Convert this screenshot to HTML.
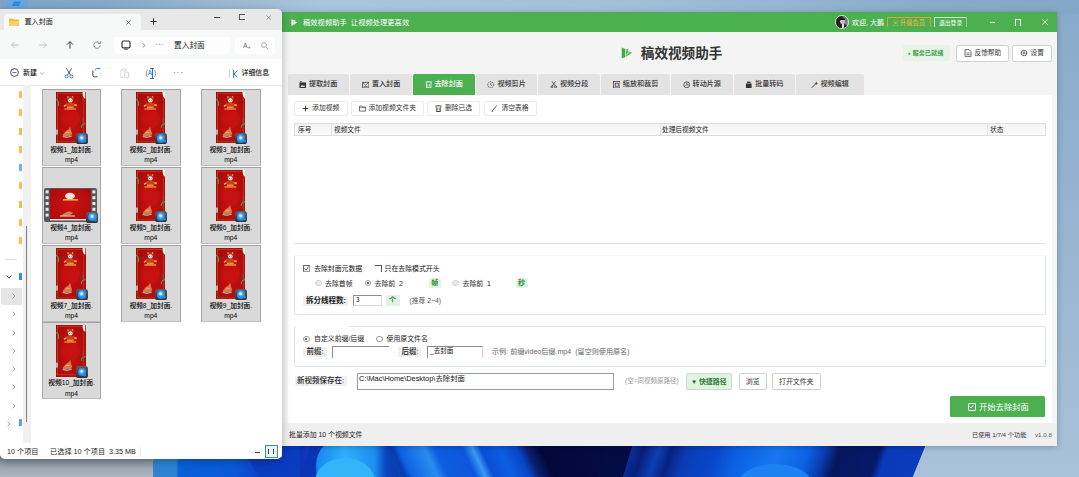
<!DOCTYPE html><html lang="zh-CN"><head><meta charset="utf-8"><title>稿效视频助手</title><style>
*{box-sizing:border-box;margin:0;padding:0}
html,body{width:1079px;height:477px;overflow:hidden}
body{position:relative;background:#a3bbd2;font-family:"Liberation Sans","Noto Sans CJK SC",sans-serif;font-size:6.9px;color:#222;line-height:1}
.a{position:absolute}
.t{position:absolute;white-space:nowrap;line-height:10px;height:10px}
#wall{left:0;top:0;width:1079px;height:477px}
/* explorer */
#ex{z-index:3;left:0;top:9px;width:281.5px;height:449.5px;background:#fff;border-radius:0 5px 5px 5px;overflow:hidden;box-shadow:0 2px 8px rgba(0,0,0,.28)}
#ex .tb{left:0;top:0;width:282px;height:21px;background:#e8e8e8}
#ex .tab{left:4px;top:5px;width:137px;height:17px;background:#f7f8f8;border-radius:4px 4px 0 0}
#ex .nav{left:0;top:21px;width:282px;height:29px;background:#f7f8f8}
#ex .addr{left:114px;top:27.5px;width:116px;height:17px;background:#fdfdfd;border-radius:2px}
#ex .srch{left:235px;top:27.5px;width:40px;height:17px;background:#fdfdfd;border-radius:2px}
#ex .cmd{left:0;top:50px;width:282px;height:26.7px;background:#fff;border-bottom:1px solid #e4e4e4}
.tile{position:absolute;width:59.5px;height:77px;background:#d9d9d9;border:1px solid #a8a8a8;border-top-color:#a2a2a2;border-bottom-color:#bcbcbc}
.thumb{position:absolute;left:13.7px;top:2.4px;width:29.3px;height:51.3px;background:radial-gradient(ellipse at 50% 52%,#c61111 0%,#b60e0e 50%,#a20b0b 100%);overflow:hidden}
.qt{position:absolute;left:33px;top:43.3px;width:12.2px;height:11.3px;border-radius:2.6px;background:linear-gradient(#5b6066,#2e3136)}
.qt:after{content:"";position:absolute;left:1.9px;top:1.4px;width:8.4px;height:8.4px;border-radius:50%;background:radial-gradient(circle at 45% 42%,#d8efff 0 14%,#7cc4fb 22%,#2a93ee 44%,#1877dd 100%)}
.qt:before{content:"";position:absolute;left:7.6px;top:7.4px;width:3.2px;height:1.6px;background:#2a93ee;transform:rotate(45deg);border-radius:.6px}
.lab{position:absolute;left:0;width:57.5px;text-align:center;font-size:6.7px;line-height:10px;color:#000;white-space:nowrap;font-weight:500}
/* app */
#app{left:282px;top:12px;width:775px;height:434px;background:#f4f4f4;box-shadow:0 1px 6px rgba(0,0,0,.25)}
#app .title{left:0;top:0;width:775px;height:19.5px;background:#4caf50}
.w{color:#fff}
.tabx{position:absolute;top:62px;height:20.5px;background:#e3e3e3;border-radius:2px 2px 0 0;font-size:7.5px;line-height:20.5px;text-align:center;color:#222;white-space:nowrap}
.tabx.on{background:#4caf50;color:#fff}
.btn{position:absolute;border:1px solid #dcdcdc;border-radius:2px;background:#fff;text-align:center;white-space:nowrap;font-size:7.5px;color:#333}
.lb{position:absolute;background:#f0f0f0;border-radius:1.5px;font-size:7.5px;line-height:10.5px;height:10.5px;padding-left:2px;white-space:nowrap;color:#222;font-weight:700}
.inp{position:absolute;background:#fff;border:1px solid #8c8c8c;border-right-color:#d6d6d6;border-bottom-color:#d6d6d6;font-size:7.2px;line-height:9px;padding-left:2px;white-space:nowrap;color:#111}
.g{position:absolute;background:#e3f3e3;color:#2e8b34;font-size:7px;line-height:10.5px;height:10.5px;text-align:center;border-radius:1.5px;font-weight:700}
.rad{position:absolute;width:6.5px;height:6.5px;border-radius:50%;border:1px solid #9a9a9a;background:#fff}
.rad.on:after{content:"";position:absolute;left:1.25px;top:1.25px;width:2px;height:2px;border-radius:50%;background:#333}
.rad.dis{border-color:#d5d5d5;background:#e9e9e9}
.chk{position:absolute;width:7px;height:7px;border:1px solid #6a6a6a;border-right-color:#999;border-bottom-color:#999;background:#fff}
.fs{position:absolute;border:1px solid #dbe3ea;border-radius:2px}
</style></head><body>
<svg id="wall" class="a" width="1079" height="477" viewBox="0 0 1079 477"><defs><linearGradient id="sky" x1="0" y1="0" x2="1" y2="0"><stop offset="0" stop-color="#7da3c5"/><stop offset=".1" stop-color="#86aac9"/><stop offset=".2" stop-color="#9ab8d2"/><stop offset=".3" stop-color="#a9c5dc"/><stop offset=".55" stop-color="#a5c1d9"/><stop offset=".7" stop-color="#98b7d2"/><stop offset=".85" stop-color="#8aacca"/><stop offset="1" stop-color="#84a7c7"/></linearGradient><linearGradient id="skyr" x1="0" y1="0" x2="0" y2="1"><stop offset="0" stop-color="#88aaca"/><stop offset=".5" stop-color="#98b5d0"/><stop offset="1" stop-color="#a9c1d9"/></linearGradient><linearGradient id="gry" x1="0" y1="0" x2="0" y2="1"><stop offset="0" stop-color="#727b85"/><stop offset=".25" stop-color="#8a949e"/><stop offset=".6" stop-color="#a0aab4"/><stop offset="1" stop-color="#adb6c0"/></linearGradient><linearGradient id="bl" gradientUnits="userSpaceOnUse" x1="153" y1="0" x2="926" y2="0"><stop offset="0.0000" stop-color="#2d82d2"/><stop offset="0.0298" stop-color="#2d82d2"/><stop offset="0.0336" stop-color="#0761da"/><stop offset="0.1061" stop-color="#0a58d6"/><stop offset="0.1410" stop-color="#0a3fc4"/><stop offset="0.1902" stop-color="#0a34b6"/><stop offset="0.2070" stop-color="#0c40c4"/><stop offset="0.2135" stop-color="#1b8af0"/><stop offset="0.2484" stop-color="#2fb0fa"/><stop offset="0.2872" stop-color="#1c8ef2"/><stop offset="0.3014" stop-color="#0b44bc"/><stop offset="0.3169" stop-color="#0a3cb0"/><stop offset="0.3247" stop-color="#0d62e2"/><stop offset="0.3583" stop-color="#2a8cf0"/><stop offset="0.3713" stop-color="#0d5ee0"/><stop offset="0.4075" stop-color="#0b57dc"/><stop offset="0.4204" stop-color="#3a9af4"/><stop offset="0.4308" stop-color="#0a4ed6"/><stop offset="0.4554" stop-color="#0d5ee2"/><stop offset="0.4774" stop-color="#0a46c8"/><stop offset="0.4903" stop-color="#08206e"/><stop offset="0.5084" stop-color="#03083a"/><stop offset="0.5977" stop-color="#040c44"/><stop offset="0.6145" stop-color="#0a2e98"/><stop offset="0.6300" stop-color="#071f78"/><stop offset="0.6494" stop-color="#0b40b8"/><stop offset="0.6662" stop-color="#07227e"/><stop offset="0.6869" stop-color="#0a3cb4"/><stop offset="0.7270" stop-color="#0a48ca"/><stop offset="0.7529" stop-color="#0c60e2"/><stop offset="0.8047" stop-color="#1878f0"/><stop offset="0.8435" stop-color="#0c62e4"/><stop offset="0.8655" stop-color="#0a3cac"/><stop offset="0.8836" stop-color="#06175e"/><stop offset="0.9353" stop-color="#06196a"/><stop offset="0.9457" stop-color="#0a3ab8"/><stop offset="1.0000" stop-color="#0b3cbc"/></linearGradient><clipPath id="blc"><path d="M153.5 477L153.5 462Q154 457 160 457L282 457L282 444L926 444L912.5 477Z"/></clipPath></defs><rect x="0" y="0" width="1079" height="477" fill="url(#skyr)"/><rect x="0" y="0" width="1079" height="14" fill="url(#sky)"/><rect x="0" y="456" width="160" height="21" fill="url(#gry)"/><g clip-path="url(#blc)"><rect x="150" y="440" width="780" height="40" fill="#0a48ca"/><rect x="150" y="440" width="250" height="40" fill="url(#bl)"/><rect x="392" y="440" width="235" height="40" fill="url(#bl)" transform="translate(0 460) skewX(25) translate(0 -460)"/><rect x="618" y="440" width="330" height="40" fill="url(#bl)" transform="translate(0 460) skewX(-20) translate(0 -460)"/><path d="M606 440L634 440L622 480L596 480Z" fill="#040c44"/><path d="M235 440H300V480H262Z" fill="#0a3cc0"/><path d="M300 480L312 440H330Q310 455 318 480Z" fill="#0a34b6"/><ellipse cx="345" cy="482" rx="30" ry="24" fill="#34b4fb"/><ellipse cx="775" cy="486" rx="38" ry="22" fill="#1c82f2"/></g><rect x="7" y="0" width="21" height="8.5" fill="#6aa6dc"/><path d="M14 1.5H21L19 6H12Z" fill="#2f8ae6"/></svg>
<div id="ex" class="a">
<div class="a tb"></div><div class="a tab"></div><div class="a nav"></div><div class="a addr"></div><div class="a srch"></div><div class="a cmd"></div>
<svg class="a" style="left:9px;top:8.6px" width="10" height="8" viewBox="0 0 10 8"><path d="M0 1.2Q0 .4 .8 .4H3.4L4.6 1.6H9.2Q10 1.6 10 2.4V7.2Q10 8 9.2 8H.8Q0 8 0 7.2Z" fill="#f0b93a"/><path d="M0 3H10V7.2Q10 8 9.2 8H.8Q0 8 0 7.2Z" fill="#f7cf63"/></svg>
<div class="t" style="left:24.5px;top:8.3px;font-size:7.1px;color:#1a1a1a">置入封面</div>
<svg class="a" style="left:126px;top:10.5px" width="5" height="5" viewBox="0 0 6 6"><path d="M.5 .5L5.5 5.5M5.5 .5L.5 5.5" stroke="#555" stroke-width=".8"/></svg>
<svg class="a" style="left:149.5px;top:9px" width="7" height="7" viewBox="0 0 7 7"><path d="M3.5 .3V6.7M.3 3.5H6.7" stroke="#222" stroke-width=".9"/></svg>
<div class="a" style="left:214px;top:8px;width:5.5px;height:1px;background:#444"></div>
<div class="a" style="left:239px;top:5.3px;width:5.8px;height:5.5px;border:1px solid #555;border-right:0"></div>
<svg class="a" style="left:266px;top:5.7px" width="5.2" height="5.2" viewBox="0 0 6 6"><path d="M.5 .5L5.5 5.5M5.5 .5L.5 5.5" stroke="#777" stroke-width=".8"/></svg>
<svg class="a" style="left:10.5px;top:32px;transform:rotate(0deg)" width="8" height="8" viewBox="0 0 8 8"><path d="M7.6 4H.6M3.6 1L.6 4L3.6 7" fill="none" stroke="#b4b4b4" stroke-width=".85"/></svg>
<svg class="a" style="left:38.5px;top:32px;transform:rotate(180deg)" width="8" height="8" viewBox="0 0 8 8"><path d="M7.6 4H.6M3.6 1L.6 4L3.6 7" fill="none" stroke="#b4b4b4" stroke-width=".85"/></svg>
<svg class="a" style="left:65.5px;top:32px;transform:rotate(90deg)" width="8" height="8" viewBox="0 0 8 8"><path d="M7.6 4H.6M3.6 1L.6 4L3.6 7" fill="none" stroke="#222" stroke-width=".85"/></svg>
<svg class="a" style="left:92.5px;top:32px" width="8" height="8" viewBox="0 0 8 8"><path d="M6.6 2.2A3.2 3.2 0 1 0 7.2 4.6" fill="none" stroke="#777" stroke-width=".85"/><path d="M7.2 .4V2.6H5" fill="none" stroke="#777" stroke-width=".85"/></svg>
<svg class="a" style="left:121px;top:30.5px" width="10" height="10" viewBox="0 0 10 10"><rect x="1" y="1" width="8" height="6.8" rx="1.4" fill="none" stroke="#333" stroke-width="1.2"/><path d="M3.2 9.2H6.8" stroke="#333" stroke-width="1"/></svg>
<svg class="a" style="left:141.5px;top:33.7px" width="4" height="5" viewBox="0 0 4 5"><path d="M.6 .5L3 2.5L.6 4.5" fill="none" stroke="#666" stroke-width=".7"/></svg>
<div class="t" style="left:155.5px;top:31px;font-size:7px;color:#444;letter-spacing:.3px">···</div>
<div class="t" style="left:174px;top:31.5px;font-size:7.7px;color:#1a1a1a">置入封面</div>
<div class="t" style="left:243px;top:31.5px;font-size:7px;color:#666">A<span style="font-size:5px;vertical-align:-1px">+</span></div>
<svg class="a" style="left:261px;top:32.5px" width="8" height="8" viewBox="0 0 8 8"><circle cx="3" cy="3" r="2.4" fill="none" stroke="#999" stroke-width=".8"/><path d="M4.8 4.8L7 7" stroke="#999" stroke-width=".8"/></svg>
<svg class="a" style="left:9.7px;top:59.3px" width="9" height="9" viewBox="0 0 9 9"><circle cx="4.5" cy="4.5" r="3.9" fill="none" stroke="#333" stroke-width=".85"/><path d="M2.4 4.5H6.6" stroke="#1b78d0" stroke-width=".9"/></svg>
<div class="t" style="left:23px;top:59px;font-size:6.9px;color:#111;font-weight:500">新建</div>
<svg class="a" style="left:40.3px;top:62.5px" width="4" height="3" viewBox="0 0 4 3"><path d="M.3 .4L2 2.3L3.7 .4" fill="none" stroke="#777" stroke-width=".6"/></svg>
<svg class="a" style="left:64px;top:59px" width="10" height="11" viewBox="0 0 10 11"><path d="M2.4 .3L6.6 7.2M7.6 .3L3.4 7.2" stroke="#444" stroke-width=".85" fill="none"/><circle cx="2.6" cy="8.4" r="1.5" fill="none" stroke="#1b78d0" stroke-width=".9"/><circle cx="7.4" cy="8.4" r="1.5" fill="none" stroke="#1b78d0" stroke-width=".9"/></svg>
<svg class="a" style="left:91.5px;top:59px" width="10" height="10" viewBox="0 0 10 10"><path d="M3.4 2.2V1.6Q3.4 .6 4.4 .6H8.4" stroke="#1b78d0" stroke-width=".95" fill="none"/><path d="M8.3 5V5.6" stroke="#1b78d0" stroke-width=".9"/><path d="M.9 2.6V7.4Q.9 8.8 2.3 8.8H5.4" stroke="#333" stroke-width=".95" fill="none"/></svg>
<svg class="a" style="left:119.5px;top:59px" width="10" height="11" viewBox="0 0 10 11"><path d="M2.6 2H1.6Q.8 2 .8 2.8V9.4H3.4" fill="none" stroke="#cfd3d8" stroke-width=".8"/><rect x="2.4" y=".8" width="3.6" height="2" rx=".8" fill="none" stroke="#cfd3d8" stroke-width=".8"/><rect x="4.6" y="4.2" width="4" height="5.6" rx=".8" fill="none" stroke="#b8d2ee" stroke-width=".9"/></svg>
<div class="t" style="left:145.5px;top:59px;font-size:6.6px;color:#555">(<span style="color:#1b78d0">A</span>&nbsp;)</div><div class="a" style="left:151.6px;top:58.8px;width:1.1px;height:11px;background:#1b78d0"></div><div class="a" style="left:150.4px;top:58.8px;width:3.4px;height:1px;background:#1b78d0"></div><div class="a" style="left:150.4px;top:68.8px;width:3.4px;height:1px;background:#1b78d0"></div>
<div class="t" style="left:173px;top:59.2px;font-size:8px;color:#333;letter-spacing:.9px">···</div>
<div class="a" style="left:228.5px;top:60.5px;width:1px;height:8px;background:#d4d4d4"></div><svg class="a" style="left:233px;top:60.5px" width="5" height="8" viewBox="0 0 5 8"><path d="M.7 0V8M4.4 .6L1 4L4.4 7.4" fill="none" stroke="#1b78d0" stroke-width="1"/></svg>
<div class="t" style="left:241.5px;top:59px;font-size:6.9px;color:#111;font-weight:500">详细信息</div>
<div class="a" style="left:22.5px;top:76px;width:8.5px;height:358px;background:#f1f1f1"></div>
<div class="a" style="left:25.8px;top:217px;width:1px;height:196px;background:#7d7d7d"></div>
<div class="a" style="left:19px;top:82.0px;width:3px;height:7px;background:#f2c04e"></div>
<div class="a" style="left:19px;top:100.2px;width:3px;height:7px;background:#f2c04e"></div>
<div class="a" style="left:19px;top:118.5px;width:3px;height:7px;background:#f2c04e"></div>
<div class="a" style="left:19px;top:136.7px;width:3px;height:7px;background:#f2c04e"></div>
<div class="a" style="left:19px;top:173.3px;width:3px;height:7px;background:#f2c04e"></div>
<div class="a" style="left:19px;top:191.5px;width:3px;height:7px;background:#f2c04e"></div>
<div class="a" style="left:19px;top:209.8px;width:3px;height:7px;background:#f2c04e"></div>
<div class="a" style="left:19px;top:228.0px;width:3px;height:7px;background:#f2c04e"></div>
<div class="a" style="left:19px;top:155px;width:3px;height:7px;background:#6fb2ef"></div>
<div class="a" style="left:19px;top:264px;width:3px;height:7px;background:#2d8cf0"></div>
<div class="a" style="left:5px;top:250px;width:12px;height:1px;background:#e2e2e2"></div>
<div class="a" style="left:1px;top:278.5px;width:21px;height:17px;background:#e5e5e5;border-radius:2px 0 0 2px"></div>
<svg class="a" style="left:5.5px;top:266px" width="6" height="4" viewBox="0 0 6 4"><path d="M.6 .6L3 3L5.4 .6" fill="none" stroke="#333" stroke-width=".9"/></svg>
<svg class="a" style="left:11.5px;top:284px" width="4" height="6" viewBox="0 0 4 6"><path d="M.6 .6L3 3L.6 5.4" fill="none" stroke="#8a8a8a" stroke-width=".8"/></svg>
<svg class="a" style="left:11.5px;top:302.2px" width="4" height="6" viewBox="0 0 4 6"><path d="M.6 .6L3 3L.6 5.4" fill="none" stroke="#8a8a8a" stroke-width=".8"/></svg>
<svg class="a" style="left:11.5px;top:320.5px" width="4" height="6" viewBox="0 0 4 6"><path d="M.6 .6L3 3L.6 5.4" fill="none" stroke="#8a8a8a" stroke-width=".8"/></svg>
<svg class="a" style="left:11.5px;top:338.7px" width="4" height="6" viewBox="0 0 4 6"><path d="M.6 .6L3 3L.6 5.4" fill="none" stroke="#8a8a8a" stroke-width=".8"/></svg>
<svg class="a" style="left:11.5px;top:357px" width="4" height="6" viewBox="0 0 4 6"><path d="M.6 .6L3 3L.6 5.4" fill="none" stroke="#8a8a8a" stroke-width=".8"/></svg>
<svg class="a" style="left:11.5px;top:375.2px" width="4" height="6" viewBox="0 0 4 6"><path d="M.6 .6L3 3L.6 5.4" fill="none" stroke="#8a8a8a" stroke-width=".8"/></svg>
<svg class="a" style="left:11.5px;top:393.5px" width="4" height="6" viewBox="0 0 4 6"><path d="M.6 .6L3 3L.6 5.4" fill="none" stroke="#8a8a8a" stroke-width=".8"/></svg>
<svg class="a" style="left:6.5px;top:411.7px" width="4" height="6" viewBox="0 0 4 6"><path d="M.6 .6L3 3L.6 5.4" fill="none" stroke="#8a8a8a" stroke-width=".8"/></svg>
<div class="a" style="left:19px;top:410px;width:3px;height:7px;background:#5aa5ec"></div>
<div class="tile" style="left:41.8px;top:79.5px;height:77px">
<div class="thumb"><svg width="29.3" height="51.3" viewBox="0 0 29.3 51.3" style="position:absolute;left:0;top:0">
<circle cx="14.5" cy="26.5" r="9.5" fill="#d01414" opacity=".4"/>
<rect x="1.3" y="1.3" width="26" height="48.6" fill="none" stroke="#c9852e" stroke-width=".45" opacity=".75"/>
<ellipse cx="14.3" cy="6.6" rx="3.5" ry="2.6" fill="#c4281c"/><circle cx="12" cy="5" r=".7" fill="#f2c84a"/><circle cx="16.6" cy="5" r=".7" fill="#f2c84a"/>
<ellipse cx="14.3" cy="8.4" rx="2.3" ry="2.2" fill="#f6efe9"/><circle cx="13.4" cy="8.2" r=".45" fill="#4a2a20"/><circle cx="15.3" cy="8.2" r=".45" fill="#4a2a20"/>
<path d="M10.4 11.2Q14.3 9.6 18.2 11.2L19.6 14.2Q14.3 15.6 9 14.2Z" fill="#d23a20"/><path d="M7.6 13.4L10.2 12.2L10.6 13.6L8.2 15Z" fill="#e9b23a"/><path d="M21 12.4L18.4 12L18.2 13.6L20.4 14.4Z" fill="#e9b23a"/>
<path d="M8.4 16.4H20.2V17.6H8.4Z" fill="#f0c43e"/><path d="M11 14.6H17.6V16.4H11Z" fill="#e8903a"/>
<path d="M0 7.2Q3.6 9 2.2 14" stroke="#3f9a80" stroke-width="1.1" fill="none"/><path d="M29.3 31.6Q24.4 32.4 25.6 36" stroke="#3f9a66" stroke-width="1.1" fill="none"/><path d="M27.2 26V31" stroke="#3f9a66" stroke-width=".5"/>
<path d="M7 42.6Q9.6 38.6 12.4 37.6L14.2 34.8L14.8 38Q16.6 40.4 15.4 43.4Q11 45.4 7 44.6Z" fill="#dc7a44"/><path d="M9.6 41Q11.6 39.6 13.4 40.6" stroke="#f3c9a6" stroke-width=".7" fill="none"/><path d="M6.6 44.6Q11 46.4 15.8 44.2" stroke="#9ed6cf" stroke-width=".9" fill="none"/>
<rect x="0" y="37.6" width="2" height="5" fill="#bfb2aa"/>
<path d="M26.6 0H29.3V6.8Q26.4 5.6 26.6 0Z" fill="#f0f0f0"/>
</svg></div><div class="qt"></div>
<div class="lab" style="top:55.3px">视频1_加封面.</div><div class="lab" style="top:65.5px">mp4</div></div>
<div class="tile" style="left:121.1px;top:79.5px;height:77px">
<div class="thumb"><svg width="29.3" height="51.3" viewBox="0 0 29.3 51.3" style="position:absolute;left:0;top:0">
<circle cx="14.5" cy="26.5" r="9.5" fill="#d01414" opacity=".4"/>
<rect x="1.3" y="1.3" width="26" height="48.6" fill="none" stroke="#c9852e" stroke-width=".45" opacity=".75"/>
<ellipse cx="14.3" cy="6.6" rx="3.5" ry="2.6" fill="#c4281c"/><circle cx="12" cy="5" r=".7" fill="#f2c84a"/><circle cx="16.6" cy="5" r=".7" fill="#f2c84a"/>
<ellipse cx="14.3" cy="8.4" rx="2.3" ry="2.2" fill="#f6efe9"/><circle cx="13.4" cy="8.2" r=".45" fill="#4a2a20"/><circle cx="15.3" cy="8.2" r=".45" fill="#4a2a20"/>
<path d="M10.4 11.2Q14.3 9.6 18.2 11.2L19.6 14.2Q14.3 15.6 9 14.2Z" fill="#d23a20"/><path d="M7.6 13.4L10.2 12.2L10.6 13.6L8.2 15Z" fill="#e9b23a"/><path d="M21 12.4L18.4 12L18.2 13.6L20.4 14.4Z" fill="#e9b23a"/>
<path d="M8.4 16.4H20.2V17.6H8.4Z" fill="#f0c43e"/><path d="M11 14.6H17.6V16.4H11Z" fill="#e8903a"/>
<path d="M0 7.2Q3.6 9 2.2 14" stroke="#3f9a80" stroke-width="1.1" fill="none"/><path d="M29.3 31.6Q24.4 32.4 25.6 36" stroke="#3f9a66" stroke-width="1.1" fill="none"/><path d="M27.2 26V31" stroke="#3f9a66" stroke-width=".5"/>
<path d="M7 42.6Q9.6 38.6 12.4 37.6L14.2 34.8L14.8 38Q16.6 40.4 15.4 43.4Q11 45.4 7 44.6Z" fill="#dc7a44"/><path d="M9.6 41Q11.6 39.6 13.4 40.6" stroke="#f3c9a6" stroke-width=".7" fill="none"/><path d="M6.6 44.6Q11 46.4 15.8 44.2" stroke="#9ed6cf" stroke-width=".9" fill="none"/>
<rect x="0" y="37.6" width="2" height="5" fill="#bfb2aa"/>
<path d="M26.6 0H29.3V6.8Q26.4 5.6 26.6 0Z" fill="#f0f0f0"/>
</svg></div><div class="qt"></div>
<div class="lab" style="top:55.3px">视频2_加封面.</div><div class="lab" style="top:65.5px">mp4</div></div>
<div class="tile" style="left:201px;top:79.5px;height:77px">
<div class="thumb"><svg width="29.3" height="51.3" viewBox="0 0 29.3 51.3" style="position:absolute;left:0;top:0">
<circle cx="14.5" cy="26.5" r="9.5" fill="#d01414" opacity=".4"/>
<rect x="1.3" y="1.3" width="26" height="48.6" fill="none" stroke="#c9852e" stroke-width=".45" opacity=".75"/>
<ellipse cx="14.3" cy="6.6" rx="3.5" ry="2.6" fill="#c4281c"/><circle cx="12" cy="5" r=".7" fill="#f2c84a"/><circle cx="16.6" cy="5" r=".7" fill="#f2c84a"/>
<ellipse cx="14.3" cy="8.4" rx="2.3" ry="2.2" fill="#f6efe9"/><circle cx="13.4" cy="8.2" r=".45" fill="#4a2a20"/><circle cx="15.3" cy="8.2" r=".45" fill="#4a2a20"/>
<path d="M10.4 11.2Q14.3 9.6 18.2 11.2L19.6 14.2Q14.3 15.6 9 14.2Z" fill="#d23a20"/><path d="M7.6 13.4L10.2 12.2L10.6 13.6L8.2 15Z" fill="#e9b23a"/><path d="M21 12.4L18.4 12L18.2 13.6L20.4 14.4Z" fill="#e9b23a"/>
<path d="M8.4 16.4H20.2V17.6H8.4Z" fill="#f0c43e"/><path d="M11 14.6H17.6V16.4H11Z" fill="#e8903a"/>
<path d="M0 7.2Q3.6 9 2.2 14" stroke="#3f9a80" stroke-width="1.1" fill="none"/><path d="M29.3 31.6Q24.4 32.4 25.6 36" stroke="#3f9a66" stroke-width="1.1" fill="none"/><path d="M27.2 26V31" stroke="#3f9a66" stroke-width=".5"/>
<path d="M7 42.6Q9.6 38.6 12.4 37.6L14.2 34.8L14.8 38Q16.6 40.4 15.4 43.4Q11 45.4 7 44.6Z" fill="#dc7a44"/><path d="M9.6 41Q11.6 39.6 13.4 40.6" stroke="#f3c9a6" stroke-width=".7" fill="none"/><path d="M6.6 44.6Q11 46.4 15.8 44.2" stroke="#9ed6cf" stroke-width=".9" fill="none"/>
<rect x="0" y="37.6" width="2" height="5" fill="#bfb2aa"/>
<path d="M26.6 0H29.3V6.8Q26.4 5.6 26.6 0Z" fill="#f0f0f0"/>
</svg></div><div class="qt"></div>
<div class="lab" style="top:55.3px">视频3_加封面.</div><div class="lab" style="top:65.5px">mp4</div></div>
<div class="tile" style="left:41.8px;top:157.5px;height:77px">
<div style="position:absolute;left:1.5px;top:20px;width:53px;height:34px;background:#55585c;border-radius:2px"></div>
<div style="position:absolute;left:7.5px;top:21.5px;width:41px;height:29.5px;background:radial-gradient(ellipse at 50% 52%,#cb1111 0%,#bb0e0e 55%,#a80b0b 100%)"></div>
<svg style="position:absolute;left:1.5px;top:20px" width="53" height="34" viewBox="0 0 53 34"><g fill="#e9e9e9"><rect x="1.6" y="2.4" width="3" height="3"/><rect x="1.6" y="8.2" width="3" height="3"/><rect x="1.6" y="14" width="3" height="3"/><rect x="1.6" y="19.8" width="3" height="3"/><rect x="1.6" y="25.6" width="3" height="3"/><rect x="48.4" y="2.4" width="3" height="3"/><rect x="48.4" y="8.2" width="3" height="3"/><rect x="48.4" y="14" width="3" height="3"/><rect x="48.4" y="19.8" width="3" height="3"/><rect x="6" y="31" width="36" height="1.4"/></g>
<ellipse cx="26" cy="8" rx="5" ry="3.2" fill="#f1e6df"/><rect x="19" y="11" width="15" height="1.6" fill="#e8b63c"/><path d="M18 27Q25 21 29 25Q27 28 17 28Z" fill="#d88248"/><path d="M16 28H31" stroke="#d8e6df" stroke-width="1"/></svg>
<div class="qt" style="left:43.5px;top:44px"></div>
<div class="lab" style="top:55.3px">视频4_加封面.</div><div class="lab" style="top:65.5px">mp4</div></div>
<div class="tile" style="left:121.1px;top:157.5px;height:77px">
<div class="thumb"><svg width="29.3" height="51.3" viewBox="0 0 29.3 51.3" style="position:absolute;left:0;top:0">
<circle cx="14.5" cy="26.5" r="9.5" fill="#d01414" opacity=".4"/>
<rect x="1.3" y="1.3" width="26" height="48.6" fill="none" stroke="#c9852e" stroke-width=".45" opacity=".75"/>
<ellipse cx="14.3" cy="6.6" rx="3.5" ry="2.6" fill="#c4281c"/><circle cx="12" cy="5" r=".7" fill="#f2c84a"/><circle cx="16.6" cy="5" r=".7" fill="#f2c84a"/>
<ellipse cx="14.3" cy="8.4" rx="2.3" ry="2.2" fill="#f6efe9"/><circle cx="13.4" cy="8.2" r=".45" fill="#4a2a20"/><circle cx="15.3" cy="8.2" r=".45" fill="#4a2a20"/>
<path d="M10.4 11.2Q14.3 9.6 18.2 11.2L19.6 14.2Q14.3 15.6 9 14.2Z" fill="#d23a20"/><path d="M7.6 13.4L10.2 12.2L10.6 13.6L8.2 15Z" fill="#e9b23a"/><path d="M21 12.4L18.4 12L18.2 13.6L20.4 14.4Z" fill="#e9b23a"/>
<path d="M8.4 16.4H20.2V17.6H8.4Z" fill="#f0c43e"/><path d="M11 14.6H17.6V16.4H11Z" fill="#e8903a"/>
<path d="M0 7.2Q3.6 9 2.2 14" stroke="#3f9a80" stroke-width="1.1" fill="none"/><path d="M29.3 31.6Q24.4 32.4 25.6 36" stroke="#3f9a66" stroke-width="1.1" fill="none"/><path d="M27.2 26V31" stroke="#3f9a66" stroke-width=".5"/>
<path d="M7 42.6Q9.6 38.6 12.4 37.6L14.2 34.8L14.8 38Q16.6 40.4 15.4 43.4Q11 45.4 7 44.6Z" fill="#dc7a44"/><path d="M9.6 41Q11.6 39.6 13.4 40.6" stroke="#f3c9a6" stroke-width=".7" fill="none"/><path d="M6.6 44.6Q11 46.4 15.8 44.2" stroke="#9ed6cf" stroke-width=".9" fill="none"/>
<rect x="0" y="37.6" width="2" height="5" fill="#bfb2aa"/>
<path d="M26.6 0H29.3V6.8Q26.4 5.6 26.6 0Z" fill="#f0f0f0"/>
</svg></div><div class="qt"></div>
<div class="lab" style="top:55.3px">视频5_加封面.</div><div class="lab" style="top:65.5px">mp4</div></div>
<div class="tile" style="left:201px;top:157.5px;height:77px">
<div class="thumb"><svg width="29.3" height="51.3" viewBox="0 0 29.3 51.3" style="position:absolute;left:0;top:0">
<circle cx="14.5" cy="26.5" r="9.5" fill="#d01414" opacity=".4"/>
<rect x="1.3" y="1.3" width="26" height="48.6" fill="none" stroke="#c9852e" stroke-width=".45" opacity=".75"/>
<ellipse cx="14.3" cy="6.6" rx="3.5" ry="2.6" fill="#c4281c"/><circle cx="12" cy="5" r=".7" fill="#f2c84a"/><circle cx="16.6" cy="5" r=".7" fill="#f2c84a"/>
<ellipse cx="14.3" cy="8.4" rx="2.3" ry="2.2" fill="#f6efe9"/><circle cx="13.4" cy="8.2" r=".45" fill="#4a2a20"/><circle cx="15.3" cy="8.2" r=".45" fill="#4a2a20"/>
<path d="M10.4 11.2Q14.3 9.6 18.2 11.2L19.6 14.2Q14.3 15.6 9 14.2Z" fill="#d23a20"/><path d="M7.6 13.4L10.2 12.2L10.6 13.6L8.2 15Z" fill="#e9b23a"/><path d="M21 12.4L18.4 12L18.2 13.6L20.4 14.4Z" fill="#e9b23a"/>
<path d="M8.4 16.4H20.2V17.6H8.4Z" fill="#f0c43e"/><path d="M11 14.6H17.6V16.4H11Z" fill="#e8903a"/>
<path d="M0 7.2Q3.6 9 2.2 14" stroke="#3f9a80" stroke-width="1.1" fill="none"/><path d="M29.3 31.6Q24.4 32.4 25.6 36" stroke="#3f9a66" stroke-width="1.1" fill="none"/><path d="M27.2 26V31" stroke="#3f9a66" stroke-width=".5"/>
<path d="M7 42.6Q9.6 38.6 12.4 37.6L14.2 34.8L14.8 38Q16.6 40.4 15.4 43.4Q11 45.4 7 44.6Z" fill="#dc7a44"/><path d="M9.6 41Q11.6 39.6 13.4 40.6" stroke="#f3c9a6" stroke-width=".7" fill="none"/><path d="M6.6 44.6Q11 46.4 15.8 44.2" stroke="#9ed6cf" stroke-width=".9" fill="none"/>
<rect x="0" y="37.6" width="2" height="5" fill="#bfb2aa"/>
<path d="M26.6 0H29.3V6.8Q26.4 5.6 26.6 0Z" fill="#f0f0f0"/>
</svg></div><div class="qt"></div>
<div class="lab" style="top:55.3px">视频6_加封面.</div><div class="lab" style="top:65.5px">mp4</div></div>
<div class="tile" style="left:41.8px;top:235.5px;height:77px">
<div class="thumb"><svg width="29.3" height="51.3" viewBox="0 0 29.3 51.3" style="position:absolute;left:0;top:0">
<circle cx="14.5" cy="26.5" r="9.5" fill="#d01414" opacity=".4"/>
<rect x="1.3" y="1.3" width="26" height="48.6" fill="none" stroke="#c9852e" stroke-width=".45" opacity=".75"/>
<ellipse cx="14.3" cy="6.6" rx="3.5" ry="2.6" fill="#c4281c"/><circle cx="12" cy="5" r=".7" fill="#f2c84a"/><circle cx="16.6" cy="5" r=".7" fill="#f2c84a"/>
<ellipse cx="14.3" cy="8.4" rx="2.3" ry="2.2" fill="#f6efe9"/><circle cx="13.4" cy="8.2" r=".45" fill="#4a2a20"/><circle cx="15.3" cy="8.2" r=".45" fill="#4a2a20"/>
<path d="M10.4 11.2Q14.3 9.6 18.2 11.2L19.6 14.2Q14.3 15.6 9 14.2Z" fill="#d23a20"/><path d="M7.6 13.4L10.2 12.2L10.6 13.6L8.2 15Z" fill="#e9b23a"/><path d="M21 12.4L18.4 12L18.2 13.6L20.4 14.4Z" fill="#e9b23a"/>
<path d="M8.4 16.4H20.2V17.6H8.4Z" fill="#f0c43e"/><path d="M11 14.6H17.6V16.4H11Z" fill="#e8903a"/>
<path d="M0 7.2Q3.6 9 2.2 14" stroke="#3f9a80" stroke-width="1.1" fill="none"/><path d="M29.3 31.6Q24.4 32.4 25.6 36" stroke="#3f9a66" stroke-width="1.1" fill="none"/><path d="M27.2 26V31" stroke="#3f9a66" stroke-width=".5"/>
<path d="M7 42.6Q9.6 38.6 12.4 37.6L14.2 34.8L14.8 38Q16.6 40.4 15.4 43.4Q11 45.4 7 44.6Z" fill="#dc7a44"/><path d="M9.6 41Q11.6 39.6 13.4 40.6" stroke="#f3c9a6" stroke-width=".7" fill="none"/><path d="M6.6 44.6Q11 46.4 15.8 44.2" stroke="#9ed6cf" stroke-width=".9" fill="none"/>
<rect x="0" y="37.6" width="2" height="5" fill="#bfb2aa"/>
<path d="M26.6 0H29.3V6.8Q26.4 5.6 26.6 0Z" fill="#f0f0f0"/>
</svg></div><div class="qt"></div>
<div class="lab" style="top:55.3px">视频7_加封面.</div><div class="lab" style="top:65.5px">mp4</div></div>
<div class="tile" style="left:121.1px;top:235.5px;height:77px">
<div class="thumb"><svg width="29.3" height="51.3" viewBox="0 0 29.3 51.3" style="position:absolute;left:0;top:0">
<circle cx="14.5" cy="26.5" r="9.5" fill="#d01414" opacity=".4"/>
<rect x="1.3" y="1.3" width="26" height="48.6" fill="none" stroke="#c9852e" stroke-width=".45" opacity=".75"/>
<ellipse cx="14.3" cy="6.6" rx="3.5" ry="2.6" fill="#c4281c"/><circle cx="12" cy="5" r=".7" fill="#f2c84a"/><circle cx="16.6" cy="5" r=".7" fill="#f2c84a"/>
<ellipse cx="14.3" cy="8.4" rx="2.3" ry="2.2" fill="#f6efe9"/><circle cx="13.4" cy="8.2" r=".45" fill="#4a2a20"/><circle cx="15.3" cy="8.2" r=".45" fill="#4a2a20"/>
<path d="M10.4 11.2Q14.3 9.6 18.2 11.2L19.6 14.2Q14.3 15.6 9 14.2Z" fill="#d23a20"/><path d="M7.6 13.4L10.2 12.2L10.6 13.6L8.2 15Z" fill="#e9b23a"/><path d="M21 12.4L18.4 12L18.2 13.6L20.4 14.4Z" fill="#e9b23a"/>
<path d="M8.4 16.4H20.2V17.6H8.4Z" fill="#f0c43e"/><path d="M11 14.6H17.6V16.4H11Z" fill="#e8903a"/>
<path d="M0 7.2Q3.6 9 2.2 14" stroke="#3f9a80" stroke-width="1.1" fill="none"/><path d="M29.3 31.6Q24.4 32.4 25.6 36" stroke="#3f9a66" stroke-width="1.1" fill="none"/><path d="M27.2 26V31" stroke="#3f9a66" stroke-width=".5"/>
<path d="M7 42.6Q9.6 38.6 12.4 37.6L14.2 34.8L14.8 38Q16.6 40.4 15.4 43.4Q11 45.4 7 44.6Z" fill="#dc7a44"/><path d="M9.6 41Q11.6 39.6 13.4 40.6" stroke="#f3c9a6" stroke-width=".7" fill="none"/><path d="M6.6 44.6Q11 46.4 15.8 44.2" stroke="#9ed6cf" stroke-width=".9" fill="none"/>
<rect x="0" y="37.6" width="2" height="5" fill="#bfb2aa"/>
<path d="M26.6 0H29.3V6.8Q26.4 5.6 26.6 0Z" fill="#f0f0f0"/>
</svg></div><div class="qt"></div>
<div class="lab" style="top:55.3px">视频8_加封面.</div><div class="lab" style="top:65.5px">mp4</div></div>
<div class="tile" style="left:201px;top:235.5px;height:77px">
<div class="thumb"><svg width="29.3" height="51.3" viewBox="0 0 29.3 51.3" style="position:absolute;left:0;top:0">
<circle cx="14.5" cy="26.5" r="9.5" fill="#d01414" opacity=".4"/>
<rect x="1.3" y="1.3" width="26" height="48.6" fill="none" stroke="#c9852e" stroke-width=".45" opacity=".75"/>
<ellipse cx="14.3" cy="6.6" rx="3.5" ry="2.6" fill="#c4281c"/><circle cx="12" cy="5" r=".7" fill="#f2c84a"/><circle cx="16.6" cy="5" r=".7" fill="#f2c84a"/>
<ellipse cx="14.3" cy="8.4" rx="2.3" ry="2.2" fill="#f6efe9"/><circle cx="13.4" cy="8.2" r=".45" fill="#4a2a20"/><circle cx="15.3" cy="8.2" r=".45" fill="#4a2a20"/>
<path d="M10.4 11.2Q14.3 9.6 18.2 11.2L19.6 14.2Q14.3 15.6 9 14.2Z" fill="#d23a20"/><path d="M7.6 13.4L10.2 12.2L10.6 13.6L8.2 15Z" fill="#e9b23a"/><path d="M21 12.4L18.4 12L18.2 13.6L20.4 14.4Z" fill="#e9b23a"/>
<path d="M8.4 16.4H20.2V17.6H8.4Z" fill="#f0c43e"/><path d="M11 14.6H17.6V16.4H11Z" fill="#e8903a"/>
<path d="M0 7.2Q3.6 9 2.2 14" stroke="#3f9a80" stroke-width="1.1" fill="none"/><path d="M29.3 31.6Q24.4 32.4 25.6 36" stroke="#3f9a66" stroke-width="1.1" fill="none"/><path d="M27.2 26V31" stroke="#3f9a66" stroke-width=".5"/>
<path d="M7 42.6Q9.6 38.6 12.4 37.6L14.2 34.8L14.8 38Q16.6 40.4 15.4 43.4Q11 45.4 7 44.6Z" fill="#dc7a44"/><path d="M9.6 41Q11.6 39.6 13.4 40.6" stroke="#f3c9a6" stroke-width=".7" fill="none"/><path d="M6.6 44.6Q11 46.4 15.8 44.2" stroke="#9ed6cf" stroke-width=".9" fill="none"/>
<rect x="0" y="37.6" width="2" height="5" fill="#bfb2aa"/>
<path d="M26.6 0H29.3V6.8Q26.4 5.6 26.6 0Z" fill="#f0f0f0"/>
</svg></div><div class="qt"></div>
<div class="lab" style="top:55.3px">视频9_加封面.</div><div class="lab" style="top:65.5px">mp4</div></div>
<div class="tile" style="left:41.8px;top:313px;height:77px">
<div class="thumb"><svg width="29.3" height="51.3" viewBox="0 0 29.3 51.3" style="position:absolute;left:0;top:0">
<circle cx="14.5" cy="26.5" r="9.5" fill="#d01414" opacity=".4"/>
<rect x="1.3" y="1.3" width="26" height="48.6" fill="none" stroke="#c9852e" stroke-width=".45" opacity=".75"/>
<ellipse cx="14.3" cy="6.6" rx="3.5" ry="2.6" fill="#c4281c"/><circle cx="12" cy="5" r=".7" fill="#f2c84a"/><circle cx="16.6" cy="5" r=".7" fill="#f2c84a"/>
<ellipse cx="14.3" cy="8.4" rx="2.3" ry="2.2" fill="#f6efe9"/><circle cx="13.4" cy="8.2" r=".45" fill="#4a2a20"/><circle cx="15.3" cy="8.2" r=".45" fill="#4a2a20"/>
<path d="M10.4 11.2Q14.3 9.6 18.2 11.2L19.6 14.2Q14.3 15.6 9 14.2Z" fill="#d23a20"/><path d="M7.6 13.4L10.2 12.2L10.6 13.6L8.2 15Z" fill="#e9b23a"/><path d="M21 12.4L18.4 12L18.2 13.6L20.4 14.4Z" fill="#e9b23a"/>
<path d="M8.4 16.4H20.2V17.6H8.4Z" fill="#f0c43e"/><path d="M11 14.6H17.6V16.4H11Z" fill="#e8903a"/>
<path d="M0 7.2Q3.6 9 2.2 14" stroke="#3f9a80" stroke-width="1.1" fill="none"/><path d="M29.3 31.6Q24.4 32.4 25.6 36" stroke="#3f9a66" stroke-width="1.1" fill="none"/><path d="M27.2 26V31" stroke="#3f9a66" stroke-width=".5"/>
<path d="M7 42.6Q9.6 38.6 12.4 37.6L14.2 34.8L14.8 38Q16.6 40.4 15.4 43.4Q11 45.4 7 44.6Z" fill="#dc7a44"/><path d="M9.6 41Q11.6 39.6 13.4 40.6" stroke="#f3c9a6" stroke-width=".7" fill="none"/><path d="M6.6 44.6Q11 46.4 15.8 44.2" stroke="#9ed6cf" stroke-width=".9" fill="none"/>
<rect x="0" y="37.6" width="2" height="5" fill="#bfb2aa"/>
<path d="M26.6 0H29.3V6.8Q26.4 5.6 26.6 0Z" fill="#f0f0f0"/>
</svg></div><div class="qt"></div>
<div class="lab" style="top:55.3px">视频10_加封面.</div><div class="lab" style="top:65.5px">mp4</div></div>
<div class="t" style="left:7px;top:437.5px;font-size:7.2px;color:#222">10 个项目</div>
<div class="t" style="left:50px;top:437.5px;font-size:7.2px;color:#222">已选择 10 个项目&nbsp; 3.35 MB</div>
<div class="a" style="left:140px;top:438px;width:1px;height:9px;background:#ececec"></div>
<div class="a" style="left:254.5px;top:442.5px;width:5px;height:1px;background:#444"></div>
<div class="a" style="left:264.5px;top:436px;width:13px;height:12.5px;border:1px solid #3c86d8;background:#eaf3fc"></div><div class="a" style="left:268.3px;top:439.5px;width:1px;height:5.5px;background:#444"></div><div class="a" style="left:272.8px;top:439.5px;width:1px;height:5.5px;background:#444"></div>
</div>
<div id="app" class="a">
<div class="a title"></div>
<svg class="a" style="left:8.5px;top:6.5px" width="7" height="7" viewBox="0 0 10 10"><path d="M.6 .4L3.6 1.6V8.4L.6 9.6Z" fill="#fff"/><path d="M4.2 2L6.4 1.2L5.6 3.6L9.4 4.8L4.2 8.2Z" fill="#e9f6e9"/><path d="M4.4 6.4L7 4.4" stroke="#fff" stroke-width=".6" opacity=".7"/></svg>
<div class="t w" style="left:21px;top:5.8px;font-size:7.3px">稿效视频助手&nbsp; 让视频处理更高效</div>
<div class="a" style="left:553px;top:3.2px;width:13.6px;height:13.6px;border-radius:50%;overflow:hidden;background:linear-gradient(100deg,#1f2022 0 38%,#6f7377 60%,#8f9498 100%);border:.5px solid #cfe3cf"><div class="a" style="left:4.2px;top:2.4px;width:4.6px;height:5.2px;border-radius:50%;background:#cdbfb8"></div><div class="a" style="left:3.6px;top:1.6px;width:5.6px;height:2.6px;border-radius:50% 50% 0 0;background:#1a1a1a"></div><div class="a" style="left:2px;top:8px;width:9px;height:7px;border-radius:40% 40% 0 0;background:#232426"></div><div class="a" style="left:5.6px;top:8px;width:2px;height:5px;background:#e8e8e8"></div></div>
<div class="t w" style="left:570px;top:5.5px;font-size:7px">欢迎, 大鹏</div>
<div class="a" style="left:605.2px;top:5px;width:43.4px;height:10px;border:.8px solid #e0a040;border-bottom:0"></div><div class="t" style="left:610.6px;top:5.7px;font-size:6.3px;color:#f7b53e"><span style="font-size:5.5px">▣</span> 升级会员</div>
<div class="a" style="left:651.5px;top:5px;width:33px;height:10px;border:.8px solid #cfe8cf;border-bottom:0;border-right-color:#8fcf92"></div><div class="t w" style="left:657px;top:5.7px;font-size:5.8px">退出登录</div>
<div class="a" style="left:707.5px;top:10px;width:5.5px;height:1px;background:#fff"></div>
<div class="a" style="left:733px;top:7px;width:6px;height:6.5px;border:1px solid #fff;border-bottom:0"></div>
<svg class="a" style="left:759.5px;top:7px" width="6" height="6" viewBox="0 0 6 6"><path d="M.4 .4L5.6 5.6M5.6 .4L.4 5.6" stroke="#fff" stroke-width=".9"/></svg>
<svg class="a" style="left:338.8px;top:34.6px" width="12" height="12" viewBox="0 0 10 10"><path d="M.6 .4L3.6 1.6V8.4L.6 9.6Z" fill="#43a948"/><path d="M4.2 2L6.4 1.2L5.6 3.6L9.4 4.8L4.2 8.2Z" fill="#5dbb62"/><path d="M4.4 6.4L7 4.4" stroke="#fff" stroke-width=".6" opacity=".7"/></svg>
<div class="t" style="left:358.8px;top:33.2px;font-size:13.6px;line-height:17px;height:17px;font-weight:700;color:#333">稿效视频助手</div>
<div class="a" style="left:621px;top:33px;width:46.5px;height:16px;background:#e6f4e7;border-radius:2px"></div><div class="t" style="left:626px;top:36px;font-size:6.2px;color:#43a047;font-weight:700"><span style="font-size:4.5px;vertical-align:.5px">●</span> 服务已就绪</div>
<div class="btn" style="left:673.5px;top:32.5px;width:53px;height:17px;border-color:#cfcfcf;border-radius:2.5px"></div>
<svg class="a" style="left:681.5px;top:37px" width="8" height="8" viewBox="0 0 8 8"><path d="M1 .6H5L7 2.6V7.4H1Z" fill="none" stroke="#444" stroke-width=".8"/><path d="M2.4 4H5.6M2.4 5.6H5.6" stroke="#444" stroke-width=".7"/></svg>
<div class="t" style="left:692.5px;top:36px;font-size:6.7px;color:#333">反馈帮助</div>
<div class="btn" style="left:730px;top:32.5px;width:39.5px;height:17px;border-color:#cfcfcf;border-radius:2.5px"></div>
<svg class="a" style="left:737.5px;top:37px" width="8" height="8" viewBox="0 0 8 8"><circle cx="4" cy="4" r="2.7" fill="none" stroke="#444" stroke-width="1.3" stroke-dasharray="1.4 .72"/><circle cx="4" cy="4" r="1" fill="none" stroke="#444" stroke-width=".7"/></svg>
<div class="t" style="left:748.5px;top:36px;font-size:6.7px;color:#333">设置</div>
<div class="tabx" style="left:5.5px;width:61.2px"></div>
<svg class="a" style="left:16.9px;top:68.5px" width="7.5" height="7.5" viewBox="0 0 8 8"><path d="M.5 1.5H7.5V7.5H.5Z" fill="#333"/><path d="M1.5 6.4L3.2 4L4.4 5.4L5.4 4.6L6.6 6.4Z" fill="#e3e3e3"/><path d="M1 .4H3" stroke="#333" stroke-width=".8"/></svg>
<div class="t" style="left:26.9px;top:67.2px;font-size:7.1px;color:#333;font-weight:500">提取封面</div>
<div class="tabx" style="left:68.2px;width:61.7px"></div>
<svg class="a" style="left:79.9px;top:68.5px" width="7.5" height="7.5" viewBox="0 0 8 8"><path d="M.6 1.4H7.4V7.4H.6Z" fill="none" stroke="#333" stroke-width=".8"/><path d="M.8 1.6L4 4.6L7.2 1.6" fill="none" stroke="#333" stroke-width=".7"/><path d="M2 6H6" stroke="#333" stroke-width=".7"/></svg>
<div class="t" style="left:89.9px;top:67.2px;font-size:7.1px;color:#333;font-weight:500">置入封面</div>
<div class="tabx on" style="left:130.7px;width:62px"></div>
<svg class="a" style="left:142.5px;top:68.5px" width="7.5" height="7.5" viewBox="0 0 8 8"><path d="M.4 1H7.6M1.4 1.4L1.8 7.4H6.2L6.6 1.4" fill="none" stroke="#fff" stroke-width=".8"/><path d="M3 3V6M5 3V6M2.8 .4H5.2" stroke="#fff" stroke-width=".7"/><path d="M1.8 7.4H6.2" stroke="#fff" stroke-width="1"/></svg>
<div class="t" style="left:152.5px;top:67.2px;font-size:7.1px;color:#fff;font-weight:500">去除封面</div>
<div class="tabx" style="left:194px;width:61.2px"></div>
<svg class="a" style="left:205.4px;top:68.5px" width="7.5" height="7.5" viewBox="0 0 8 8"><circle cx="4" cy="4" r="3.2" fill="none" stroke="#333" stroke-width=".8" stroke-dasharray="1.6 .7"/><path d="M4 2.2V4.2L5.4 5" fill="none" stroke="#333" stroke-width=".7"/></svg>
<div class="t" style="left:215.4px;top:67.2px;font-size:7.1px;color:#333;font-weight:500">视频剪片</div>
<div class="tabx" style="left:256.3px;width:61.5px"></div>
<svg class="a" style="left:267.9px;top:68.5px" width="7.5" height="7.5" viewBox="0 0 8 8"><path d="M2.2 .4L5.6 5.4M5.8 .4L2.4 5.4" stroke="#333" stroke-width=".8" fill="none"/><circle cx="2" cy="6.3" r="1.1" fill="none" stroke="#333" stroke-width=".8"/><circle cx="6" cy="6.3" r="1.1" fill="none" stroke="#333" stroke-width=".8"/></svg>
<div class="t" style="left:277.9px;top:67.2px;font-size:7.1px;color:#333;font-weight:500">视频分段</div>
<div class="tabx" style="left:319px;width:69px"></div>
<svg class="a" style="left:330.8px;top:68.5px" width="7.5" height="7.5" viewBox="0 0 8 8"><rect x=".6" y=".6" width="6.8" height="6.8" fill="none" stroke="#333" stroke-width=".8"/><rect x="2.4" y="2.4" width="3.2" height="3.2" fill="none" stroke="#333" stroke-width=".8"/></svg>
<div class="t" style="left:340.8px;top:67.2px;font-size:7.1px;color:#333;font-weight:500">缩放和裁剪</div>
<div class="tabx" style="left:389px;width:61.7px"></div>
<svg class="a" style="left:400.6px;top:68.5px" width="7.5" height="7.5" viewBox="0 0 8 8"><circle cx="4" cy="4" r="3.2" fill="none" stroke="#333" stroke-width=".8"/><path d="M4 1.6V4H6.2" fill="none" stroke="#333" stroke-width=".8"/><path d="M2.4 4.2L4 5.8" stroke="#333" stroke-width=".6"/></svg>
<div class="t" style="left:410.6px;top:67.2px;font-size:7.1px;color:#333;font-weight:500">转动片源</div>
<div class="tabx" style="left:451.5px;width:61.7px"></div>
<svg class="a" style="left:463.1px;top:68.5px" width="7.5" height="7.5" viewBox="0 0 8 8"><path d="M1 2.6H7V7.6H1Z" fill="#333"/><path d="M2 .6H6V2H2Z" fill="#333"/></svg>
<div class="t" style="left:473.1px;top:67.2px;font-size:7.1px;color:#333;font-weight:500">批量转码</div>
<div class="tabx" style="left:514px;width:67.5px"></div>
<svg class="a" style="left:528.5px;top:68.5px" width="7.5" height="7.5" viewBox="0 0 8 8"><path d="M.8 7.2L5 3" stroke="#333" stroke-width="1"/><path d="M5.6 .4L6.1 1.9L7.6 2.4L6.1 2.9L5.6 4.4L5.1 2.9L3.6 2.4L5.1 1.9Z" fill="#333"/></svg>
<div class="t" style="left:538.5px;top:67.2px;font-size:7.1px;color:#333;font-weight:500">视频编辑</div>
<div class="a" style="left:5.5px;top:82.5px;width:764px;height:328.8px;background:#fff"></div>
<div class="btn" style="left:12px;top:88.5px;width:53.5px;height:15.5px;border-color:#ebebeb"></div>
<svg class="a" style="left:20.1px;top:92.8px" width="7" height="7" viewBox="0 0 8 8"><path d="M4 .8V7.2M.8 4H7.2" stroke="#333" stroke-width="1.2"/></svg>
<div class="t" style="left:30.1px;top:91.3px;font-size:6.8px;color:#333">添加视频</div>
<div class="btn" style="left:68.5px;top:88.5px;width:73.5px;height:15.5px;border-color:#ebebeb"></div>
<svg class="a" style="left:76.5px;top:92.8px" width="7" height="7" viewBox="0 0 8 8"><path d="M.6 2.2V7H7.4V2.2H4L3.2 1.2H.6Z" fill="none" stroke="#333" stroke-width=".75"/><path d="M.6 3H7.4" stroke="#333" stroke-width=".6"/></svg>
<div class="t" style="left:86.5px;top:91.3px;font-size:6.8px;color:#333">添加视频文件夹</div>
<div class="btn" style="left:145px;top:88.5px;width:53px;height:15.5px;border-color:#ebebeb"></div>
<svg class="a" style="left:152.9px;top:92.8px" width="7" height="7" viewBox="0 0 8 8"><path d="M.4 1H7.6M1.4 1.4L1.8 7.4H6.2L6.6 1.4" fill="none" stroke="#333" stroke-width=".8"/><path d="M3 3V6M5 3V6M2.8 .4H5.2" stroke="#333" stroke-width=".7"/><path d="M1.8 7.4H6.2" stroke="#333" stroke-width="1"/></svg>
<div class="t" style="left:162.9px;top:91.3px;font-size:6.8px;color:#333">删除已选</div>
<div class="btn" style="left:201.5px;top:88.5px;width:53px;height:15.5px;border-color:#ebebeb"></div>
<svg class="a" style="left:209.4px;top:92.8px" width="7" height="7" viewBox="0 0 8 8"><path d="M1 7.4L6.6 .6" stroke="#333" stroke-width=".9"/><path d="M.8 7.6H2.6" stroke="#333" stroke-width=".6"/></svg>
<div class="t" style="left:219.4px;top:91.3px;font-size:6.8px;color:#333">清空表格</div>
<div class="a" style="left:12px;top:111px;width:751.5px;height:13px;background:linear-gradient(#f4f4f4,#fcfcfc);border:1px solid #dedede"></div>
<div class="a" style="left:49px;top:112px;width:1px;height:11px;background:#e2e2e2"></div>
<div class="a" style="left:378px;top:112px;width:1px;height:11px;background:#e2e2e2"></div>
<div class="a" style="left:705px;top:112px;width:1px;height:11px;background:#e2e2e2"></div>
<div class="t" style="left:16px;top:112.8px;font-size:6.7px;color:#222">序号</div>
<div class="t" style="left:52px;top:112.8px;font-size:6.7px;color:#222">视频文件</div>
<div class="t" style="left:380px;top:112.8px;font-size:6.7px;color:#222">处理后视频文件</div>
<div class="t" style="left:708px;top:112.8px;font-size:6.7px;color:#222">状态</div>
<div class="a" style="left:12px;top:230.5px;width:751.5px;height:1px;background:#e0e3e6"></div>
<div class="fs" style="left:12px;top:243px;width:751.5px;height:59.5px;border-top-color:#f3f6f8"></div>
<div class="chk" style="left:21px;top:253.2px"></div><svg class="a" style="left:22px;top:254.2px" width="5" height="5" viewBox="0 0 5 5"><path d="M.5 2.5L2 4.2L4.6 .6" fill="none" stroke="#333" stroke-width=".8"/></svg>
<div class="t" style="left:32px;top:252px;color:#111">去除封面元数据</div>
<div class="chk" style="left:92.5px;top:253.4px;border-left:0;border-bottom:0;border-color:#555"></div>
<div class="t" style="left:102.5px;top:252px;color:#111">只在去除模式开头</div>
<div class="rad dis" style="left:33px;top:267.5px"></div><div class="t" style="left:43px;top:266.6px">去除首帧</div>
<div class="rad on" style="left:82.5px;top:267.5px"></div><div class="t" style="left:92.5px;top:266.6px">去除前&nbsp; 2</div>
<div class="g" style="left:147px;top:265.7px;width:11.5px">帧</div>
<div class="rad dis" style="left:170px;top:267.5px"></div><div class="t" style="left:180.5px;top:266.6px">去除前&nbsp; 1</div>
<div class="g" style="left:233.5px;top:265.7px;width:12px">秒</div>
<div class="lb" style="left:21px;top:283.5px;width:45px;padding-left:3px">拆分线程数:</div>
<div class="inp" style="left:71px;top:282.5px;width:28.5px;height:11.5px;font-size:6.3px;line-height:8.5px">3</div>
<div class="g" style="left:103.5px;top:283.3px;width:14px">个</div>
<div class="t" style="left:127.5px;top:283.5px;font-size:6.8px;color:#555">(推荐 2~4)</div>
<div class="fs" style="left:12px;top:314px;width:751.5px;height:40.5px"></div><div class="a" style="left:14px;top:313.5px;width:53px;height:2px;background:#fff"></div>
<div class="rad on" style="left:21px;top:323.7px"></div><div class="t" style="left:32px;top:322.3px">自定义前缀/后缀</div>
<div class="rad" style="left:94px;top:323.7px"></div><div class="t" style="left:104.5px;top:322.3px">使用原文件名</div>
<div class="lb" style="left:21px;top:334.7px;width:24px;padding-left:3.5px;font-weight:500">前缀:</div>
<div class="inp" style="left:50px;top:334px;width:57px;height:12px;border-right:0;border-bottom:0"></div>
<div class="lb" style="left:116px;top:334.7px;width:23px;padding-left:3.5px;font-weight:500">后缀:</div>
<div class="inp" style="left:145px;top:334px;width:56px;height:12px;border-bottom:0;font-size:6.6px;line-height:8px">_去封面</div>
<div class="t" style="left:210px;top:335px;font-size:7.1px;color:#666">示例: 前缀video后缀.mp4&nbsp; (留空则使用原名)</div>
<div class="lb" style="left:12.5px;top:363.5px;width:52px;font-weight:500;padding-left:2.5px">新视频保存在:</div>
<div class="inp" style="left:75px;top:361px;width:256.5px;height:17px;border-color:#9a9a9a;font-size:7.4px;padding-left:1px;line-height:9px">C:\Mac\Home\Desktop\去除封面</div>
<div class="t" style="left:343px;top:364px;font-size:6.5px;color:#999">(空=同视频原路径)</div>
<div class="btn" style="left:403.5px;top:361.2px;width:46.5px;height:16.6px;line-height:15px;background:#e3f2e3;border-color:#c4dfc5;color:#2e7d32;font-weight:700;font-size:6.9px"><span style="font-size:6.2px;vertical-align:.3px;color:#1f5f24">▼</span> 快捷路径</div>
<div class="btn" style="left:457px;top:361.2px;width:27.5px;height:16.6px;line-height:15px;border-color:#d0d0d0;font-size:6.9px">浏览</div>
<div class="btn" style="left:490px;top:361.2px;width:48.5px;height:16.6px;line-height:15px;border-color:#d0d0d0;font-size:6.9px">打开文件夹</div>
<div class="a" style="left:668px;top:383.7px;width:95px;height:21.3px;background:#4caf50;border-radius:1.5px"></div>
<div class="a" style="left:685.5px;top:390.5px;width:8px;height:8px;border:1px solid #fff;border-radius:1px"></div><svg class="a" style="left:687px;top:392px" width="5" height="5" viewBox="0 0 5 5"><path d="M.6 2.6L2 4.1L4.5 .8" fill="none" stroke="#fff" stroke-width=".9"/></svg>
<div class="t w" style="left:697px;top:389.7px;font-size:8.3px">开始去除封面</div>
<div class="a" style="left:0;top:411.3px;width:775px;height:22.7px;background:#efefef"></div>
<div class="t" style="left:7px;top:417.5px;font-size:6.9px;color:#222">批量添加 10 个视频文件</div>
<div class="t" style="left:690px;top:417.5px;font-size:6.2px;color:#333">已使用 1/7/4 个功能</div>
<div class="t" style="left:753px;top:417.5px;font-size:6.2px;color:#666">v1.0.8</div>
</div>
</body></html>
